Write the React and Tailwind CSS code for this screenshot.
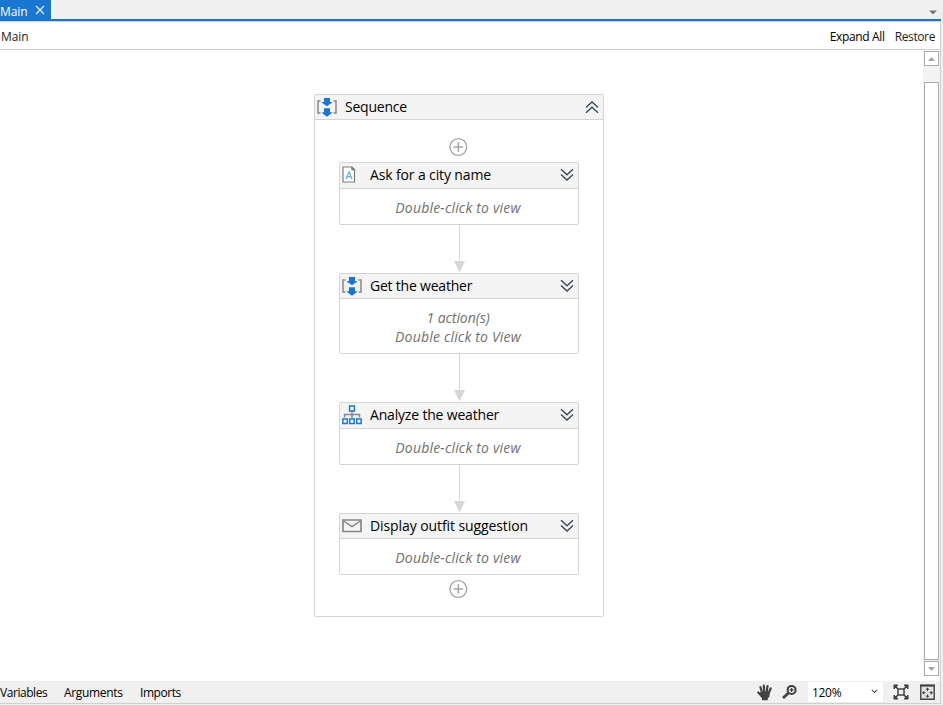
import React from "react";

function SequenceIcon() {
  return (
    <svg width="20" height="20" viewBox="0 0 20 20" className="block shrink-0">
      <path d="M3.500 4H1v12h2.500M16.500 4H19v12h-2.500" fill="none" stroke="#868686" strokeWidth="1.500" />
      <path d="M7 1h6v4h2v.7L10 9.200 5 5.700V5h2z" fill="#1976d2" />
      <path d="M7 11.300h6v4h2v.7l-5 3.700-5-3.700v-.7h2z" fill="#1976d2" />
    </svg>
  );
}

function DocumentIcon() {
  return (
    <svg width="20" height="19" viewBox="0 0 20 19" className="block shrink-0">
      <path d="M1 1h9l2.500 2.500V16H1z" fill="#fff" stroke="#7d7d7d" strokeWidth="1.200" />
      <path d="M9.700.700v3.200h3.200" fill="#7d7d7d" stroke="#7d7d7d" strokeWidth=".8" />
      <path d="M4 13.200L7 5.700l3 7.500M5 10.700h4" fill="none" stroke="#62b0e6" strokeWidth="1.200" />
    </svg>
  );
}

function FlowIcon() {
  return (
    <svg width="20" height="20" viewBox="0 0 20 20" className="block shrink-0">
      <path d="M10 6v7M2.500 12.500v-3h15v3" fill="none" stroke="#868686" strokeWidth="1.500" />
      <path d="M7.600 1.100h4.800v4.800H7.600zM.9 13.900h4.400v4.500H.9zM7.800 13.900h4.400v4.500H7.800zM14.700 13.900h4.400v4.500h-4.400z" fill="#fff" stroke="#1976d2" strokeWidth="1.500" />
    </svg>
  );
}

function MailIcon() {
  return (
    <svg width="20" height="14" viewBox="0 0 20 14" className="block shrink-0">
      <path d="M1 1h18v11.500H1z" fill="#f4f4f4" stroke="#868686" strokeWidth="1.700" />
      <path d="M1 1.500L10 7.700l9-6.200" fill="none" stroke="#868686" strokeWidth="1.400" />
    </svg>
  );
}

function Chevrons({ up = false }) {
  return (
    <svg width="14" height="14" viewBox="0 0 14 14" className={up ? "block rotate-180" : "block"}>
      <path d="M1 1.300l6 5.500 6-5.500M1 6.500L7 12l6-5.500" fill="none" stroke="#3b4658" strokeWidth="1.400" />
    </svg>
  );
}

function PlusCircle() {
  return (
    <svg width="20" height="20" viewBox="0 0 20 20" className="block">
      <circle cx="10.300" cy="10" r="8.400" fill="#fff" stroke="#a6a6a6" strokeWidth="1.400" />
      <path d="M10.300 5.200v9.600M5.500 10h9.600" stroke="#a6a6a6" strokeWidth="1.600" />
    </svg>
  );
}

function Connector() {
  return (
    <div className="ml-[115px] flex h-[48px] w-[11px] flex-col items-center">
      <div className="w-px grow bg-[#d6d6d6]" />
      <svg width="11" height="12" viewBox="0 0 11 12" className="block">
        <path d="M0 0h11L5.500 11.500z" fill="#d6d6d6" />
      </svg>
    </div>
  );
}

function Activity({ icon, title, titleClass, headerClass, bodyClass, children }) {
  return (
    <div className="w-[240px] rounded-[2px] border border-[#d4d4d4] bg-white">
      <div className={`flex items-center border-b border-[#d4d4d4] bg-[#f4f4f4] pl-[2px] pr-[4px] ${headerClass}`}>
        {icon}
        <span className={`ml-[8px] grow whitespace-nowrap text-[14px] leading-[20px] text-black ${titleClass}`}>{title}</span>
        <Chevrons />
      </div>
      <div className={`flex flex-col items-center justify-center pr-[2px] pt-[2px] text-[14px] italic leading-[19px] tracking-[0.190px] text-[#707070] ${bodyClass}`}>
        {children}
      </div>
    </div>
  );
}

const viewHint = <span className="whitespace-nowrap">Double-click to view</span>;

function ScrollButton({ down = false }) {
  return (
    <div className="flex h-[15px] w-[15px] items-center justify-center border border-[#ababab] bg-white">
      <svg width="7" height="4" viewBox="0 0 7 4" className={down ? "rotate-180" : ""}>
        <path d="M0 4L3.500 0 7 4z" fill="#a6a6a6" />
      </svg>
    </div>
  );
}

function HandIcon() {
  return (
    <svg width="16" height="17" viewBox="0 0 16 17" className="block">
      <path d="M5 8.500L3.400 3.200M7.200 8L6.800 1.700M9.700 8l.8-6M11.700 9l2-4.500M4.500 12L1.300 8.500" stroke="#424242" strokeWidth="2.200" strokeLinecap="round" />
      <path d="M4 7.500h8.700l-.2 5-1.800 2v1.700H5v-1.900L2.200 10z" fill="#424242" />
    </svg>
  );
}

function ZoomIcon() {
  return (
    <svg width="16" height="16" viewBox="0 0 16 16" className="block">
      <circle cx="9.600" cy="5.900" r="4" fill="none" stroke="#424242" strokeWidth="2" />
      <path d="M6.800 8.700L1 14" stroke="#424242" strokeWidth="2.800" />
      <path d="M9.600 3.900v4M7.600 5.900h4" stroke="#424242" strokeWidth="1.400" />
    </svg>
  );
}

function FitIcon() {
  return (
    <svg width="16" height="16" viewBox="0 0 16 16" className="block">
      <path d="M5 5h6v6H5z" fill="none" stroke="#424242" strokeWidth="1.500" />
      <path d="M1 1l4 4M15 1l-4 4M1 15l4-4M15 15l-4-4" stroke="#424242" strokeWidth="1.700" />
      <path d="M1 5V1h4zM11 1h4v4zM1 11v4h4zM15 11v4h-4z" fill="#424242" stroke="#424242" />
    </svg>
  );
}

function OverviewIcon() {
  return (
    <svg width="15" height="16" viewBox="0 0 15 16" className="block">
      <path d="M.8 1.500h13.400v13.700H.8z" fill="#e3e3e3" stroke="#424242" strokeWidth="1.400" />
      <path d="M0 .5h15v2H0z" fill="#424242" />
      <path d="M7.500 3.500l2 2.200h-4zM7.500 14l2-2.200h-4zM2 8.700l2.200-2v4zM13 8.700l-2.200-2v4z" fill="#424242" />
      <path d="M7.500 5v2M7.500 10.500v2M3 8.700h2.500M9.500 8.700H12" stroke="#424242" />
    </svg>
  );
}

export default function App() {
  return (
    <div className="flex h-[705px] w-[943px] flex-col overflow-hidden bg-[#f0f0f0] font-['Open_Sans','Noto_Sans',sans-serif] text-[12px] text-[#1e1e1e]">
      <div className="flex h-[19px] shrink-0 items-center justify-between">
        <div className="flex h-[19px] w-[51px] items-center bg-[#1976d2] pt-[4px] text-white">
          <span className="w-[35px] leading-[16px] tracking-[-0.100px]">Main</span>
          <svg width="10" height="10" viewBox="0 0 10 10" className="-mt-[4px]">
            <path d="M1 1l8 8M9 1L1 9" stroke="#d9eafa" strokeWidth="1.400" />
          </svg>
        </div>
        <svg width="8" height="5" viewBox="0 0 8 5" className="mr-[6px] mt-[5px]">
          <path d="M0 .5h8L4 4.500z" fill="#777" />
        </svg>
      </div>
      <div className="h-[2px] w-[941px] shrink-0 bg-[#1976d2]" />

      <div className="flex h-[683px] w-[941px] shrink-0 flex-col border-b border-r border-t border-[#cfcfcf] bg-white">
        <div className="flex h-[28px] shrink-0 items-center border-b border-[#cfcfcf] pl-px pr-[5px] pt-[2px]">
          <span className="grow tracking-[-0.100px]">Main</span>
          <span className="mr-[10px] tracking-[-0.350px] text-black">Expand All</span>
          <span className="tracking-[-0.380px]">Restore</span>
        </div>

        <div className="flex h-[631px] shrink-0">
          <div className="w-[923px] pl-[314px] pt-[44px]">
            <div className="h-[523px] w-[290px] rounded-[2px] border border-[#d4d4d4] bg-white">
              <div className="flex h-[25px] items-center border-b border-[#d4d4d4] bg-[#f4f4f4] pl-[2px] pr-[4px]">
                <SequenceIcon />
                <span className="ml-[8px] grow text-[14px] leading-[20px] tracking-[-0.220px] text-black">Sequence</span>
                <Chevrons up />
              </div>
              <div className="pl-[24px]">
                <div className="flex h-[42px] items-end pb-[5px] pl-[109px]"><PlusCircle /></div>
                <Activity icon={<DocumentIcon />} title="Ask for a city name" titleClass="tracking-[-0.130px]" headerClass="h-[26px] pb-px" bodyClass="h-[35px]">{viewHint}</Activity>
                <Connector />
                <Activity icon={<SequenceIcon />} title="Get the weather" titleClass="tracking-[-0.210px]" headerClass="h-[25px]" bodyClass="h-[54px]">
                  <span className="tracking-[-0.050px]">1 action(s)</span>
                  <span>Double click to View</span>
                </Activity>
                <Connector />
                <Activity icon={<FlowIcon />} title="Analyze the weather" titleClass="tracking-[-0.180px]" headerClass="h-[26px] pb-px" bodyClass="h-[35px]">{viewHint}</Activity>
                <Connector />
                <Activity icon={<MailIcon />} title="Display outfit suggestion" titleClass="tracking-[-0.090px]" headerClass="h-[25px]" bodyClass="h-[35px]">{viewHint}</Activity>
                <div className="pl-[109px] pt-[4px]"><PlusCircle /></div>
              </div>
            </div>
          </div>
          <div className="flex w-[17px] flex-col items-center bg-white pt-px">
            <div className="flex h-[625px] w-[17px] flex-col items-center bg-[#f3f3f3]">
              <ScrollButton />
              <div className="mb-px mt-[16px] w-[15px] grow border border-[#ababab] bg-white" />
              <ScrollButton down />
            </div>
          </div>
        </div>

        <div className="flex h-[22px] shrink-0 items-center bg-[#f0f0f0] pr-[5px] text-black">
          <span className="w-[64px] pt-px tracking-[-0.450px]">Variables</span>
          <span className="w-[76px] pt-px tracking-[-0.330px]">Arguments</span>
          <span className="grow pt-px tracking-[-0.450px]">Imports</span>
          <HandIcon />
          <div className="ml-[9px] mr-px"><ZoomIcon /></div>
          <div className="ml-[9px] flex h-[20px] w-[75px] items-center justify-between bg-white pl-[4px] pr-[5px]">
            <span className="pt-px tracking-[-0.300px]">120%</span>
            <svg width="7" height="5" viewBox="0 0 7 5" className="-mt-[2px]">
              <path d="M.8.8l2.700 2.700L6.200.8" fill="none" stroke="#555" strokeWidth="1.200" />
            </svg>
          </div>
          <div className="ml-[10px]"><FitIcon /></div>
          <div className="ml-[11px]"><OverviewIcon /></div>
        </div>
      </div>
    </div>
  );
}
